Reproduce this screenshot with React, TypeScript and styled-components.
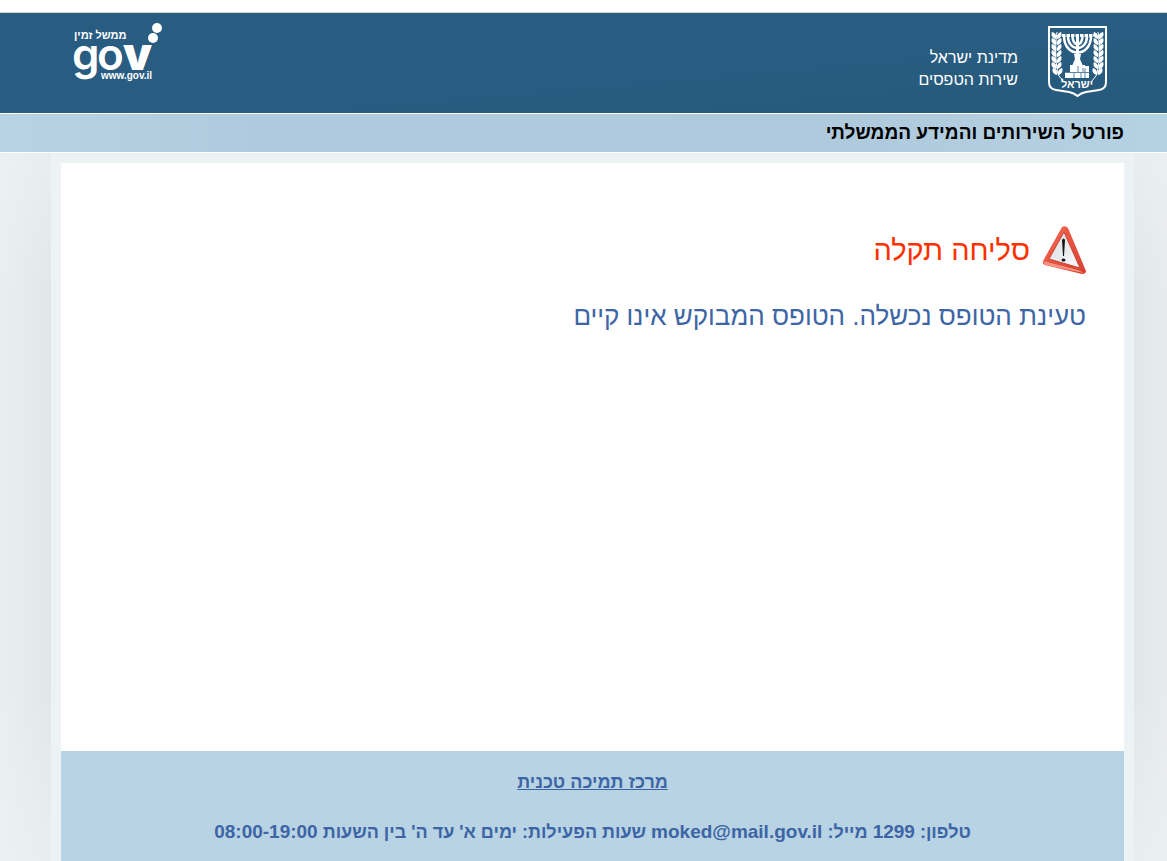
import React from "react";
import styled, { createGlobalStyle } from "styled-components";

const GlobalStyle = createGlobalStyle`
  * { box-sizing: border-box; }
  html, body, #root { height: 100%; }
  body {
    margin: 0;
    background: #fff;
    font-family: "Liberation Sans", Arial, sans-serif;
  }
`;

const Page = styled.div`
  min-height: 100%;
  padding-top: 12px;
  display: flex;
  flex-direction: column;
`;

const Header = styled.header`
  display: flex;
  justify-content: space-between;
  align-items: flex-start;
  height: 102px;
  padding: 8px 60px 0 72px;
  border-top: 1px solid #d5d5d5;
  border-bottom: 1px solid #fff;
  background: linear-gradient(175deg, #285c80 0%, #285c80 60%, #265a7c 100%);
`;

const StateBrand = styled.div`
  display: flex;
  align-items: flex-start;
  gap: 30px;
  padding-top: 4px;
`;

const StateText = styled.p`
  margin: 22px 0 0;
  color: #fff;
  font-size: 16px;
  line-height: 22px;
`;

const Band = styled.div`
  display: flex;
  align-items: center;
  height: 39px;
  padding: 0 43px;
  border-bottom: 1px solid #fff;
  background: linear-gradient(90deg, #b7d3e4 0%, #afcadc 22%, #afcadc 75%, #b5d2e3 100%);
`;

const PortalTitle = styled.h1`
  margin: 0;
  color: #000;
  font-size: 19px;
  line-height: 24px;
  font-weight: 700;
`;

const Backdrop = styled.div`
  flex: 1;
  display: flex;
  padding: 0 33px 0 51px;
  background:
    linear-gradient(180deg, rgba(237, 242, 245, 0.6) 0, rgba(237, 242, 245, 0) 140px, rgba(237, 242, 245, 0) 75%, rgba(237, 242, 245, 0.6) 100%),
    linear-gradient(90deg, #e9eef1 0, #e1e7e6 51px, #e1e7e6 calc(100% - 33px), #e7ebee 100%);
`;

const Frame = styled.div`
  flex: 1;
  display: flex;
  flex-direction: column;
  padding: 10px 10px 0;
  background: #edf2f5;
`;

const Main = styled.main`
  flex: 1;
  padding: 62px 38px 0;
  background: #fff;
`;

const ErrorHeading = styled.h2`
  display: flex;
  align-items: center;
  gap: 12px;
  margin: 0;
  color: #ff3000;
  font-size: 29px;
  line-height: 50px;
  font-weight: 400;
`;

const Message = styled.p`
  margin: 21px 0 0;
  color: #3d65a5;
  font-size: 26px;
  line-height: 40px;
`;

const Footer = styled.footer`
  height: 110px;
  padding-top: 20px;
  background: #b8d3e3;
  color: #3d65a5;
  font-size: 18px;
  line-height: 22px;
  font-weight: 700;
  text-align: center;
`;

const SupportLink = styled.a`
  color: inherit;
`;

const Contact = styled.p`
  margin: 28px 0 0;
`;

const Latin = styled.bdi`
  font-size: 19px;
`;

const LogoText = styled.text`
  fill: #fff;
  direction: ltr;
`;

function GovLogo() {
  return (
    <svg width="92" height="62" viewBox="0 0 92 62" role="img" aria-label="gov.il" direction="ltr">
      <LogoText x="2" y="18" fontFamily="Liberation Sans" fontWeight="700" fontSize="11">ממשל זמין</LogoText>
      <LogoText x="0" y="49" fontFamily="Inter" fontWeight="600" fontSize="44">g</LogoText>
      <LogoText x="25" y="49" fontFamily="Inter" fontWeight="600" fontSize="44">o</LogoText>
      <LogoText x="51" y="49" fontFamily="Inter" fontWeight="900" fontSize="46">v</LogoText>
      <LogoText x="29" y="58" fontFamily="Liberation Sans" fontWeight="700" fontSize="10">www.gov.il</LogoText>
      <g fill="#fff">
        <circle cx="81" cy="17" r="5" />
        <circle cx="85" cy="7" r="5" />
      </g>
    </svg>
  );
}

const leafRows = [0, 1, 2, 3, 4, 5, 6];

function Branch() {
  return (
    <g>
      <path d="M9 7C7 20 7 41 11 51L16 57" fill="none" stroke="#fff" strokeWidth="1" />
      {leafRows.map((i) => (
        <g key={i} transform={`translate(${8 + (i > 5 ? i - 5 : 0)} ${8 + i * 6})`} fill="#fff">
          <path d="M0 6C-5 5-5 1-4-1C0 0 1 3 0 6Z" />
          <path d="M1 6C6 5 6 1 5-1C2 0 0 3 1 6Z" />
        </g>
      ))}
    </g>
  );
}

function Emblem() {
  return (
    <svg width="59" height="74" viewBox="0 0 59 74" role="img" aria-label="סמל מדינת ישראל">
      <path d="M1 2H58V57Q58 64 51 65L38 67Q33 68 29.500 71Q26 68 21 67L8 65Q1 64 1 57Z" fill="none" stroke="#fff" strokeWidth="2" />
      <Branch />
      <g transform="translate(59 0) scale(-1 1)"><Branch /></g>
      <g fill="none" stroke="#fff" strokeWidth="2.500">
        <path d="M16 11C16 33 43 33 43 11M20 11C20 27 39 27 39 11M24.500 11C24.500 22 34.500 22 34.500 11" />
        <path d="M29.500 9V40" strokeWidth="3" />
        <path d="M14 10.500H46" strokeWidth="3" strokeDasharray="3.500 1" />
      </g>
      <path d="M26 29H33L32 34L35 41H24L27 34Z" fill="#fff" />
      <path d="M22 40H37V41H41V53H17V47H22Z" fill="#fff" />
      <path d="M17 47.500H41M30 41V47M35 43V47M26 48V53M33 48V53M37 43V53" stroke="#5d86a2" strokeWidth="1" />
      <LogoText x="29" y="63" textAnchor="middle" fontFamily="Liberation Sans" fontWeight="700" fontSize="11">ישראל</LogoText>
    </svg>
  );
}

function WarningIcon() {
  return (
    <svg width="44" height="50" viewBox="0 0 44 50" aria-hidden="true">
      <defs>
        <linearGradient id="rim" x1="0" y1="0" x2="1" y2="1">
          <stop offset="0" stopColor="#f4705b" />
          <stop offset="0.500" stopColor="#e8513e" />
          <stop offset="1" stopColor="#d8402f" />
        </linearGradient>
        <linearGradient id="plate" x1="0" y1="0" x2="1" y2="1">
          <stop offset="0" stopColor="#d8dbdd" />
          <stop offset="1" stopColor="#fafafa" />
        </linearGradient>
      </defs>
      <path d="M20 2Q23 0 26 3L44 46Q44 49 40 49L3 40Q0 39 1 36Z" fill="url(#rim)" />
      <path d="M1 36L36 45L42 48L3 40Z" fill="#f59482" />
      <path d="M22 7L38 43L7 34Z" fill="url(#plate)" stroke="#c84536" strokeWidth="1" />
      <path d="M20 15Q22 12 23 15L22 31H21Z" fill="#151515" />
      <ellipse cx="21.500" cy="35" rx="2" ry="1.500" fill="#151515" />
    </svg>
  );
}

export default function App() {
  return (
    <Page dir="rtl" lang="he">
      <GlobalStyle />
      <Header dir="ltr">
        <GovLogo />
        <StateBrand dir="rtl">
          <Emblem />
          <StateText>
            מדינת ישראל
            <br />
            שירות הטפסים
          </StateText>
        </StateBrand>
      </Header>
      <Band>
        <PortalTitle>פורטל השירותים והמידע הממשלתי</PortalTitle>
      </Band>
      <Backdrop>
        <Frame>
          <Main>
            <ErrorHeading>
              <WarningIcon />
              סליחה תקלה
            </ErrorHeading>
            <Message>טעינת הטופס נכשלה. הטופס המבוקש אינו קיים</Message>
          </Main>
          <Footer>
            <SupportLink href="#support">מרכז תמיכה טכנית</SupportLink>
            <Contact>
              טלפון: <Latin>1299</Latin> מייל: <Latin>moked@mail.gov.il</Latin> שעות הפעילות: ימים א' עד ה' בין השעות{" "}
              <Latin dir="ltr">08:00-19:00</Latin>
            </Contact>
          </Footer>
        </Frame>
      </Backdrop>
    </Page>
  );
}
